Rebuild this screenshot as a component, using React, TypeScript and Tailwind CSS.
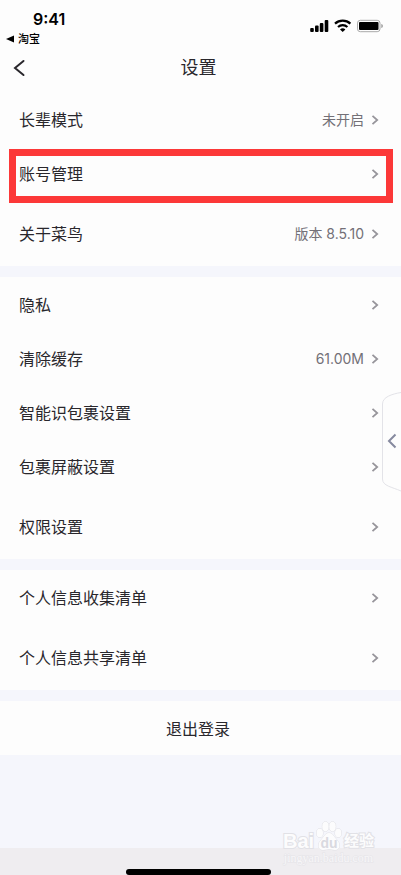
type Item = { label: string; value?: string; marked?: boolean };

const sections: Item[][] = [
  [
    { label: '长辈模式', value: '未开启' },
    { label: '账号管理', marked: true },
    { label: '关于菜鸟', value: '版本 8.5.10' },
  ],
  [
    { label: '隐私' },
    { label: '清除缓存', value: '61.00M' },
    { label: '智能识包裹设置' },
    { label: '包裹屏蔽设置' },
    { label: '权限设置' },
  ],
  [{ label: '个人信息收集清单' }, { label: '个人信息共享清单' }],
];

function Chevron() {
  return (
    <svg className="h-[10px] w-[8px]" viewBox="0 0 8 10" fill="none" stroke="#97959b" strokeWidth="1.8" aria-hidden="true">
      <path d="M1.5 0.8 6.2 5 1.5 9.2" />
    </svg>
  );
}

function Row({ item }: { item: Item }) {
  return (
    <li className="relative h-[54px] last:h-[66px]">
      <button type="button" className="flex h-full w-full items-center justify-between pt-[2px] pr-[22px] pl-[19px] text-left">
        <span className="text-base text-[#29272c]">{item.label}</span>
        <span className="flex items-center gap-[7px]">
          {item.value && <span className="text-sm text-[#737077]">{item.value}</span>}
          <Chevron />
        </span>
      </button>
      {item.marked && (
        <span className="pointer-events-none absolute top-[3px] right-[8px] left-[9px] h-[54px] border-[7px] border-[#fc3838]" />
      )}
    </li>
  );
}

function StatusBar() {
  return (
    <div className="flex h-[46px] justify-between text-black">
      <div>
        <div className="mt-[9px] pl-[33px] text-base leading-5 font-semibold">9:41</div>
        <a href="#taobao" className="mt-[2px] flex items-center gap-[4px] pl-[6px] text-[11px] leading-4 font-medium">
          <svg className="h-[8px] w-[8px]" viewBox="0 0 8 8" aria-hidden="true">
            <path d="M0 4 8 0.5v7z" />
          </svg>
          淘宝
        </a>
      </div>
      <svg className="mt-[18px] mr-[17px] h-[15px] w-[74px]" viewBox="0 0 74 15" aria-hidden="true">
        <rect x="0.2" y="10" width="3.600" height="4" rx="1" />
        <rect x="5" y="7.5" width="3.600" height="6.5" rx="1" />
        <rect x="9.800" y="5" width="3.600" height="9" rx="1" />
        <rect x="14.700" y="2" width="3.600" height="12" rx="1" />
        <g fill="none" stroke="#000" strokeWidth="2.2">
          <path d="M25 5.6a11.4 11.4 0 0 1 15.4 0" />
          <path d="M28 9a7 7 0 0 1 9.4 0" />
        </g>
        <path d="M32.7 14 30 11.4a4 4 0 0 1 5.4 0z" />
        <rect x="47.5" y="2.3" width="22.5" height="11.4" rx="2.8" fill="none" stroke="#a9a9a9" />
        <rect x="49" y="4" width="19.5" height="8" rx="1" />
        <path d="M71.2 6v4c1.2-.3 1.8-1 1.8-2s-.6-1.7-1.8-2z" fill="#a9a9a9" />
      </svg>
    </div>
  );
}

function Watermark() {
  return (
    <div
      className="pointer-events-none absolute right-[27px] bottom-[10px] w-[91px] font-['Liberation_Sans','Noto_Sans_CJK_SC',sans-serif] text-[#fcfcfd]"
      aria-hidden="true"
    >
      <div className="flex h-[32px] items-end justify-between leading-5 font-bold [paint-order:stroke] [-webkit-text-stroke:2px_#e1e1e6]">
        <span className="text-xl leading-5">Bai</span>
        <span className="relative h-[30px] w-[26px]">
          <svg className="h-full w-full" viewBox="0 0 26 30" fill="#fcfcfd" stroke="#e1e1e6" aria-hidden="true">
            <ellipse cx="3.800" cy="12" rx="3.2" ry="4.3" />
            <ellipse cx="9.500" cy="5.500" rx="3.2" ry="4.8" />
            <ellipse cx="16.500" cy="5.500" rx="3.2" ry="4.8" />
            <ellipse cx="22.200" cy="12" rx="3.2" ry="4.3" />
            <path d="M13 12c-4 0-5 4-8 7-4 4-3 10 2 10 3 0 4-1 6-1s3 1 6 1c5 0 6-6 2-10-3-3-4-7-8-7z" />
          </svg>
          <span className="absolute inset-x-0 bottom-0 text-center text-sm leading-4 text-[#d9d9e0] [-webkit-text-stroke:0]">du</span>
        </span>
        <span className="text-[15px] leading-5">经验</span>
      </div>
      <div className="text-center font-['Liberation_Serif',serif] text-xs leading-[14px] text-[#f7f6f8] [paint-order:stroke] [-webkit-text-stroke:1px_#e5e4e8]">
        jingyan.baidu.com
      </div>
    </div>
  );
}

export default function App() {
  return (
    <div className="relative flex min-h-screen w-full flex-col bg-[#f5f6fc] font-['Inter','Noto_Sans_CJK_SC',sans-serif]">
      <header className="bg-[#fdfdfd]">
        <StatusBar />
        <div className="grid h-[46px] grid-cols-[1fr_auto_1fr] items-center pr-[4px] pb-[2px]">
          <button type="button" aria-label="返回" className="justify-self-start px-[13px] py-2">
            <svg className="h-[18px] w-[12px]" viewBox="0 0 12 18" fill="none" stroke="#29272c" strokeWidth="2" strokeLinecap="round" aria-hidden="true">
              <path d="M10.5 2 2 9l8.500 7" />
            </svg>
          </button>
          <h1 className="text-lg leading-6 text-[#29272c]">设置</h1>
        </div>
      </header>

      <main className="flex flex-1 flex-col gap-[11px]">
        {sections.map((items) => (
          <ul key={items[0].label} className="bg-[#fdfdfd]">
            {items.map((item) => (
              <Row key={item.label} item={item} />
            ))}
          </ul>
        ))}
        <button type="button" className="h-[54px] bg-[#fdfdfd] pt-[2px] pr-[5px] text-base text-[#29272c]">
          退出登录
        </button>
      </main>

      <footer className="flex h-[27px] items-end justify-center bg-[#efedf0] pr-[4px]">
        <div className="h-[6px] w-[145px] rounded-full bg-black" />
      </footer>

      <button type="button" aria-label="展开" className="absolute top-[391px] right-0 h-[101px] w-[19px]">
        <svg className="h-full w-full" viewBox="0 0 19 101" fill="none" aria-hidden="true">
          <path d="M19 1.500C10 3 .5 6 .5 13v75c0 7 9.500 8 18.500 12" fill="#fdfdfd" stroke="#e3e3e8" />
          <path d="M13.500 43.500 7 50l6.500 6.500" stroke="#868a9f" strokeWidth="2" />
        </svg>
      </button>
      <Watermark />
    </div>
  );
}
